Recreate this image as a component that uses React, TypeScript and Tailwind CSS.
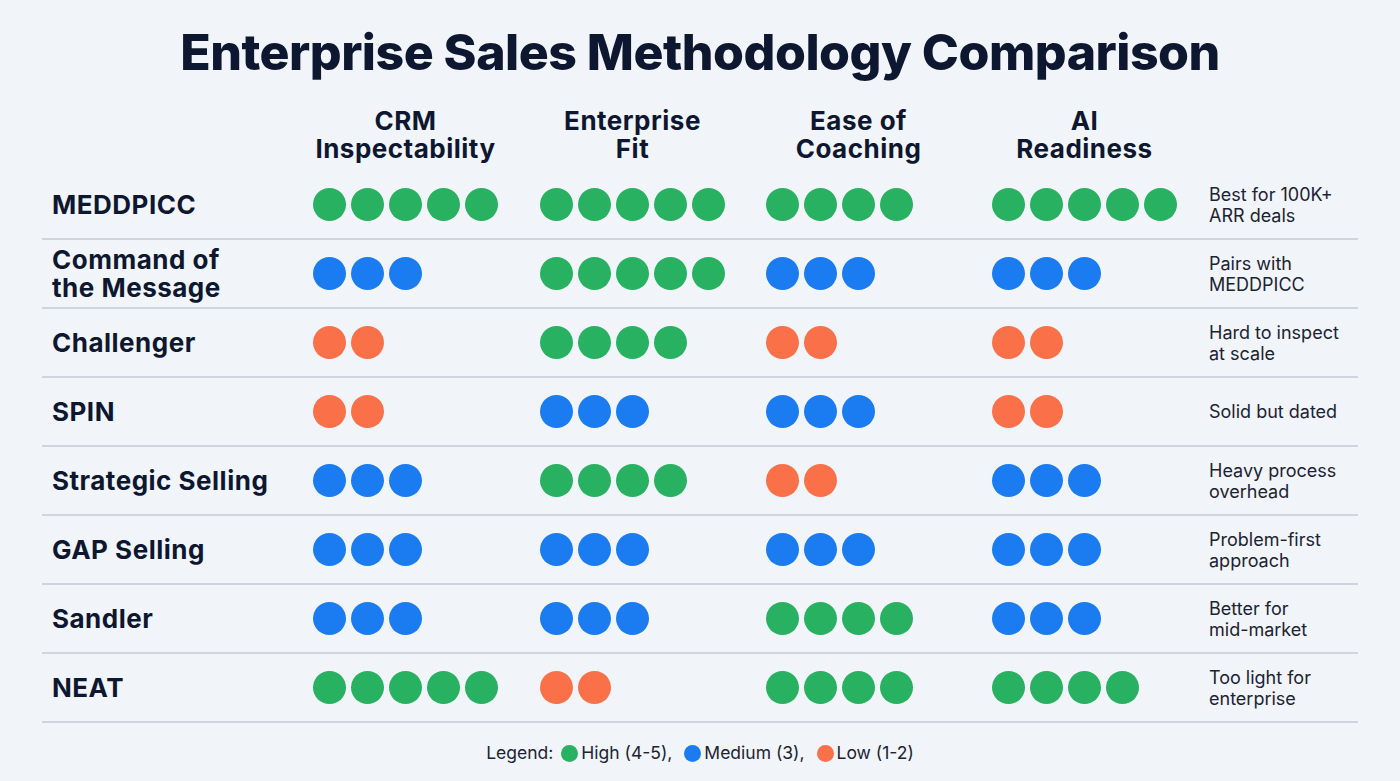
import React from 'react';

type Level = 'high' | 'medium' | 'low';

const dotColor: Record<Level, string> = {
  high: 'bg-[#27b161]',
  medium: 'bg-[#1b7cf2]',
  low: 'bg-[#fa7149]',
};

interface Row {
  name: string[];
  scores: [Level, number][];
  note: string[];
}

const rows: Row[] = [
  { name: ['MEDDPICC'], scores: [['high', 5], ['high', 5], ['high', 4], ['high', 5]], note: ['Best for 100K+', 'ARR deals'] },
  { name: ['Command of', 'the Message'], scores: [['medium', 3], ['high', 5], ['medium', 3], ['medium', 3]], note: ['Pairs with', 'MEDDPICC'] },
  { name: ['Challenger'], scores: [['low', 2], ['high', 4], ['low', 2], ['low', 2]], note: ['Hard to inspect', 'at scale'] },
  { name: ['SPIN'], scores: [['low', 2], ['medium', 3], ['medium', 3], ['low', 2]], note: ['Solid but dated'] },
  { name: ['Strategic Selling'], scores: [['medium', 3], ['high', 4], ['low', 2], ['medium', 3]], note: ['Heavy process', 'overhead'] },
  { name: ['GAP Selling'], scores: [['medium', 3], ['medium', 3], ['medium', 3], ['medium', 3]], note: ['Problem-first', 'approach'] },
  { name: ['Sandler'], scores: [['medium', 3], ['medium', 3], ['high', 4], ['medium', 3]], note: ['Better for', 'mid-market'] },
  { name: ['NEAT'], scores: [['high', 5], ['low', 2], ['high', 4], ['high', 4]], note: ['Too light for', 'enterprise'] },
];

const columns = [
  ['CRM', 'Inspectability'],
  ['Enterprise', 'Fit'],
  ['Ease of', 'Coaching'],
  ['AI', 'Readiness'],
];

// column widths for the four score columns
const colWidths = ['w-[227px]', 'w-[226px]', 'w-[226px]', 'w-[217px]'];

const Dots: React.FC<{ level: Level; count: number }> = ({ level, count }) => (
  <div className="flex gap-[5px]">
    {Array.from({ length: count }).map((_, i) => (
      <span key={i} className={`block h-[33px] w-[33px] rounded-full ${dotColor[level]}`} />
    ))}
  </div>
);

const App: React.FC = () => {
  return (
    <div className="min-h-screen w-full bg-[#f1f4f8] font-['Inter',sans-serif] text-[#0e1730]">
      <h1 className="pt-[22px] text-center text-[50px] font-extrabold leading-[60px] tracking-[-0.5px] text-[#0e1730]">
        Enterprise Sales Methodology Comparison
      </h1>

      <div className="mx-[42px]">
        {/* Column headers */}
        <div className="mt-[22px] flex h-[62px] items-center">
          <div className="w-[271px]" />
          {columns.map((c, i) => (
            <div key={i} className={colWidths[i]}>
              <div className="w-[185px] text-center text-[26px] font-bold leading-[28px] tracking-[0.5px]">
                {c[0]}
                <br />
                {c[1]}
              </div>
            </div>
          ))}
        </div>

        {/* Rows */}
        <div className="mt-[5px]">
          {rows.map((r, idx) => (
            <div key={idx} className="flex h-[69px] items-center border-b-2 border-[#cfd5de]">
              <div className="w-[271px] pl-[10px] text-[26px] font-bold leading-[28px] tracking-[0.5px]">
                {r.name.map((n, j) => (
                  <div key={j}>{n}</div>
                ))}
              </div>
              {r.scores.map(([lvl, n], i) => (
                <div key={i} className={colWidths[i]}>
                  <Dots level={lvl} count={n} />
                </div>
              ))}
              <div className="flex-1 text-[18px] leading-[21px] text-[#1c2333]">
                {r.note.map((n, j) => (
                  <div key={j}>{n}</div>
                ))}
              </div>
            </div>
          ))}
        </div>

        {/* Legend */}
        <div className="mt-[17px] flex items-center justify-center text-[17.5px] text-[#1c2333]">
          <span>Legend:</span>
          <span className="ml-[8px] mr-[3px] block h-[17px] w-[17px] rounded-full bg-[#27b161]" />
          <span>High (4-5),</span>
          <span className="ml-[12px] mr-[3px] block h-[17px] w-[17px] rounded-full bg-[#1b7cf2]" />
          <span>Medium (3),</span>
          <span className="ml-[12px] mr-[3px] block h-[17px] w-[17px] rounded-full bg-[#fa7149]" />
          <span>Low (1-2)</span>
        </div>
      </div>
    </div>
  );
};

export default App;
